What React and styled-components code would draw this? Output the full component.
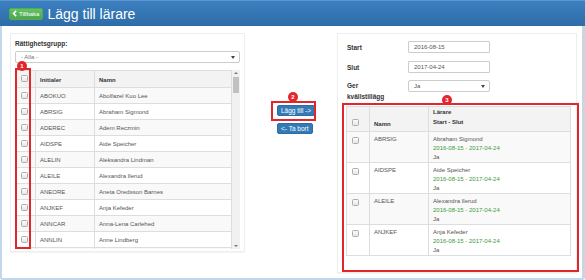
import React from "react";
import styled, { createGlobalStyle } from "styled-components";

// global
const GlobalStyle = createGlobalStyle`
    body {
        margin: 0;
        background: #fff;
        font-family: "Liberation Sans", Arial, sans-serif;
    }
`;

// data
const allTeachers = [
    ["ABOKUO", "Abolfazel Kuo Lee"],
    ["ABRSIG", "Abraham Sigmond"],
    ["ADEREC", "Adem Reczmin"],
    ["AIDSPE", "Aide Speicher"],
    ["ALELIN", "Aleksandra Lindman"],
    ["ALEILE", "Alexandra Ilerud"],
    ["ANEORE", "Aneta Oredsson Barnes"],
    ["ANJKEF", "Anja Kefeder"],
    ["ANNCAR", "Anna-Lena Carlehed"],
    ["ANNLIN", "Anne Lindberg"],
    ["", ""],
];

const added = [
    ["ABRSIG", "Abraham Sigmond"],
    ["AIDSPE", "Aide Speicher"],
    ["ALEILE", "Alexandra Ilerud"],
    ["ANJKEF", "Anja Kefeder"],
];

// frame + header
const Frame = styled.div`
    width: 585px;
    height: 280px;
    display: flex;
    flex-direction: column;
`;

const Header = styled.header`
    height: 26px;
    flex-shrink: 0;
    display: flex;
    align-items: center;
    gap: 4px;
    padding-left: 9px;
    background: linear-gradient(#3c80c1, #2d6ca7);
    border-top: 1px solid #5b95cc;
    box-sizing: border-box;
`;

const BackButton = styled.button`
    height: 12px;
    display: flex;
    align-items: center;
    gap: 1px;
    padding: 0 3px 0 2px;
    border: 1px solid #4cae4c;
    border-radius: 2px;
    background: linear-gradient(#62c462, #51a351);
    color: #fff;
    font-family: inherit;
    font-size: 6px;
    svg {
        display: block;
    }
`;

const Title = styled.h1`
    margin: 0;
    color: #fff;
    font-size: 14px;
    font-weight: normal;
`;

const Body = styled.div`
    flex: 1;
    display: flex;
    padding: 7px 0 0 8px;
    border-left: 2px solid #c3d7ea;
    border-right: 3px solid #c9d6e2;
    border-bottom: 2px solid #c3d7ea;
    border-radius: 0 0 3px 3px;
`;

// panels
const Panel = styled.section`
    width: ${(p) => p.$width}px;
    height: ${(p) => p.$height}px;
    box-sizing: border-box;
    border: 1px solid #eeeeee;
    box-shadow: 0 1px 1px rgba(0, 0, 0, 0.04);
    padding: ${(p) => p.$padding};
    flex-shrink: 0;
`;

const Label = styled.div`
    font-size: 6.5px;
    font-weight: bold;
    color: #333;
    line-height: ${(p) => p.$lh || 9}px;
`;

const Select = styled.div`
    height: 12px;
    width: ${(p) => p.$width || "auto"};
    box-sizing: border-box;
    margin-top: ${(p) => p.$mt || 0}px;
    border: 1px solid #cccccc;
    border-radius: 2px;
    display: flex;
    align-items: center;
    justify-content: space-between;
    padding: 0 4px 0 5px;
    font-size: 6px;
    color: ${(p) => p.$color || "#777"};
    &::after {
        content: "";
        border-left: 2px solid transparent;
        border-right: 2px solid transparent;
        border-top: 3px solid #444;
    }
`;

const Input = styled.div`
    width: 82px;
    height: 12px;
    box-sizing: border-box;
    border: 1px solid #cccccc;
    border-radius: 1px;
    padding-left: 5px;
    font-size: 6px;
    line-height: 10px;
    color: #555;
`;

// annotation overlay
const Marked = styled.div`
    position: relative;
`;

const Highlight = styled.div`
    position: absolute;
    left: ${(p) => p.$left}px;
    top: ${(p) => p.$top}px;
    width: ${(p) => p.$w}px;
    height: ${(p) => p.$h}px;
    box-sizing: border-box;
    border: 2px solid #e3262b;
    pointer-events: none;
`;

const Badge = styled.span`
    position: absolute;
    left: ${(p) => p.$left}px;
    top: ${(p) => p.$top}px;
    width: 10px;
    height: 10px;
    border-radius: 50%;
    background: #e3262b;
    color: #fff;
    font-size: 6px;
    font-weight: bold;
    line-height: 10px;
    text-align: center;
`;

const ButtonGroup = styled(Marked)`
    width: 45px;
    margin-left: 26px;
    padding: 4px 0 5px 6px;
    box-sizing: border-box;
`;

const ResultBox = styled(Marked)`
    margin-top: 1px;
    width: 237px;
    height: 169px;
    padding: 3px 8px 0 4px;
    box-sizing: border-box;
`;

// tables
const ScrollArea = styled.div`
    margin-top: 7px;
    height: 179px;
    display: flex;
    overflow: hidden;
`;

const Table = styled.table`
    width: ${(p) => p.$width}px;
    border-collapse: collapse;
    table-layout: fixed;
    font-size: 6px;
    color: #555;
    align-self: flex-start;
    td,
    th {
        border: 1px solid #dddddd;
        text-align: left;
        vertical-align: ${(p) => (p.$top ? "top" : "middle")};
        padding: 0 0 0 4px;
    }
    th {
        background: #f3f3f3;
        color: #333;
        font-weight: bold;
        vertical-align: bottom;
        padding-bottom: 4px;
    }
    tbody tr:nth-child(odd) td {
        background: #f9f9f9;
    }
`;

const Row = styled.tr`
    height: ${(p) => p.$h}px;
`;

const CheckCell = styled.td`
    && {
        padding: ${(p) => (p.$top ? "5px 0 0 5px" : "0 0 0 5px")};
    }
`;

const CheckHead = styled.th`
    && {
        padding: 0 0 5px 5px;
    }
`;

const Checkbox = styled.span`
    display: block;
    width: 7px;
    height: 7px;
    box-sizing: border-box;
    border: 1px solid #adadad;
    border-radius: 1.5px;
    background: linear-gradient(#fcfcfc, #e6e6e6);
`;

const Lines = styled.div`
    padding-top: 3px;
    line-height: 9px;
`;

const Green = styled.div`
    color: #3b9a3b;
`;

const Scrollbar = styled.div`
    width: 8px;
    height: 179px;
    background: #f1f1f1;
    display: flex;
    flex-direction: column;
    align-items: center;
    justify-content: space-between;
    padding: 2px 0;
    box-sizing: border-box;
`;

const Arrow = styled.span`
    border-left: 2px solid transparent;
    border-right: 2px solid transparent;
    ${(p) => (p.$up ? "border-bottom: 2px solid #777;" : "border-top: 2px solid #777;")}
`;

const Thumb = styled.span`
    width: 6px;
    height: 16px;
    margin-top: 3px;
    background: #c1c1c1;
    flex: 0 0 auto;
    margin-bottom: auto;
`;

// middle
const Middle = styled.div`
    width: 92px;
    flex-shrink: 0;
    padding-top: 68px;
    box-sizing: border-box;
`;

const BlueButton = styled.button`
    display: block;
    height: 11px;
    padding: 0 3px;
    border: 1px solid #2e6da4;
    border-radius: 2px;
    background: #337ab7;
    color: #fff;
    font-family: inherit;
    font-size: 6.5px;
    line-height: 9px;
    margin: ${(p) => p.$margin || 0};
`;

// right form
const FormRow = styled.div`
    display: flex;
    align-items: ${(p) => (p.$top ? "flex-start" : "center")};
    padding-left: 5px;
    margin-bottom: ${(p) => p.$mb || 0}px;
    & > :first-child {
        width: 61px;
    }
`;

const App = () => {
    return (
        <>
            <GlobalStyle />
            <Frame>
                <Header>
                    <BackButton>
                        <svg width="6" height="7" viewBox="0 0 6 7">
                            <path d="M4.2 0.8 L1.6 3.5 L4.2 6.2" fill="none" stroke="#fff" strokeWidth="1.6" />
                        </svg>
                        Tillbaka
                    </BackButton>
                    <Title>Lägg till lärare</Title>
                </Header>
                <Body>
                    <Panel $width={235} $height={219} $padding="5px 4px 4px 4px">
                        <Label>Rättighetsgrupp:</Label>
                        <Select $mt={3}>- Alla -</Select>
                        <Marked>
                            <ScrollArea>
                                <Table $width={218}>
                                    <colgroup>
                                        <col style={{ width: 20 }} />
                                        <col style={{ width: 59 }} />
                                        <col />
                                    </colgroup>
                                    <thead>
                                        <Row $h={17}>
                                            <CheckHead>
                                                <Checkbox />
                                            </CheckHead>
                                            <th>Initialer</th>
                                            <th>Namn</th>
                                        </Row>
                                    </thead>
                                    <tbody>
                                        {allTeachers.map(([id, name], i) => (
                                            <Row $h={16} key={i}>
                                                <CheckCell>{id && <Checkbox />}</CheckCell>
                                                <td>{id}</td>
                                                <td>{name}</td>
                                            </Row>
                                        ))}
                                    </tbody>
                                </Table>
                                <Scrollbar>
                                    <Arrow $up />
                                    <Thumb />
                                    <Arrow />
                                </Scrollbar>
                            </ScrollArea>
                            <Highlight $left={0} $top={-2} $w={16} $h={181} />
                            <Badge $left={2} $top={-9}>1</Badge>
                        </Marked>
                    </Panel>

                    <Middle>
                        <ButtonGroup>
                            <BlueButton>Lägg till -&gt;</BlueButton>
                            <Highlight $left={0} $top={0} $w={45} $h={20} />
                            <Badge $left={17} $top={-9}>2</Badge>
                        </ButtonGroup>
                        <BlueButton $margin="2px 0 0 32px">&lt;- Ta bort</BlueButton>
                    </Middle>

                    <Panel $width={240} $height={240} $padding="7px 0 0 4px">
                        <FormRow $mb={8}>
                            <Label>Start</Label>
                            <Input>2016-08-15</Input>
                        </FormRow>
                        <FormRow $mb={7}>
                            <Label>Slut</Label>
                            <Input>2017-04-24</Input>
                        </FormRow>
                        <FormRow $top>
                            <Label $lh={11}>
                                Ger
                                <br />
                                kvällstillägg
                            </Label>
                            <Select $width="82px" $color="#555">Ja</Select>
                        </FormRow>
                        <ResultBox>
                            <Table $width={225} $top>
                                <colgroup>
                                    <col style={{ width: 23 }} />
                                    <col style={{ width: 59 }} />
                                    <col />
                                </colgroup>
                                <thead>
                                    <Row $h={23}>
                                        <CheckHead>
                                            <Checkbox />
                                        </CheckHead>
                                        <th>Namn</th>
                                        <th style={{ lineHeight: "10px" }}>
                                            Lärare
                                            <br />
                                            Start - Slut
                                        </th>
                                    </Row>
                                </thead>
                                <tbody>
                                    {added.map(([id, name]) => (
                                        <Row $h={31} key={id}>
                                            <CheckCell $top>
                                                <Checkbox />
                                            </CheckCell>
                                            <td>
                                                <Lines>{id}</Lines>
                                            </td>
                                            <td>
                                                <Lines>
                                                    {name}
                                                    <Green>2016-08-15 - 2017-04-24</Green>
                                                    Ja
                                                </Lines>
                                            </td>
                                        </Row>
                                    ))}
                                </tbody>
                            </Table>
                            <Highlight $left={0} $top={0} $w={237} $h={169} />
                            <Badge $left={100} $top={-8}>3</Badge>
                        </ResultBox>
                    </Panel>
                </Body>
            </Frame>
        </>
    );
};

export default App;
